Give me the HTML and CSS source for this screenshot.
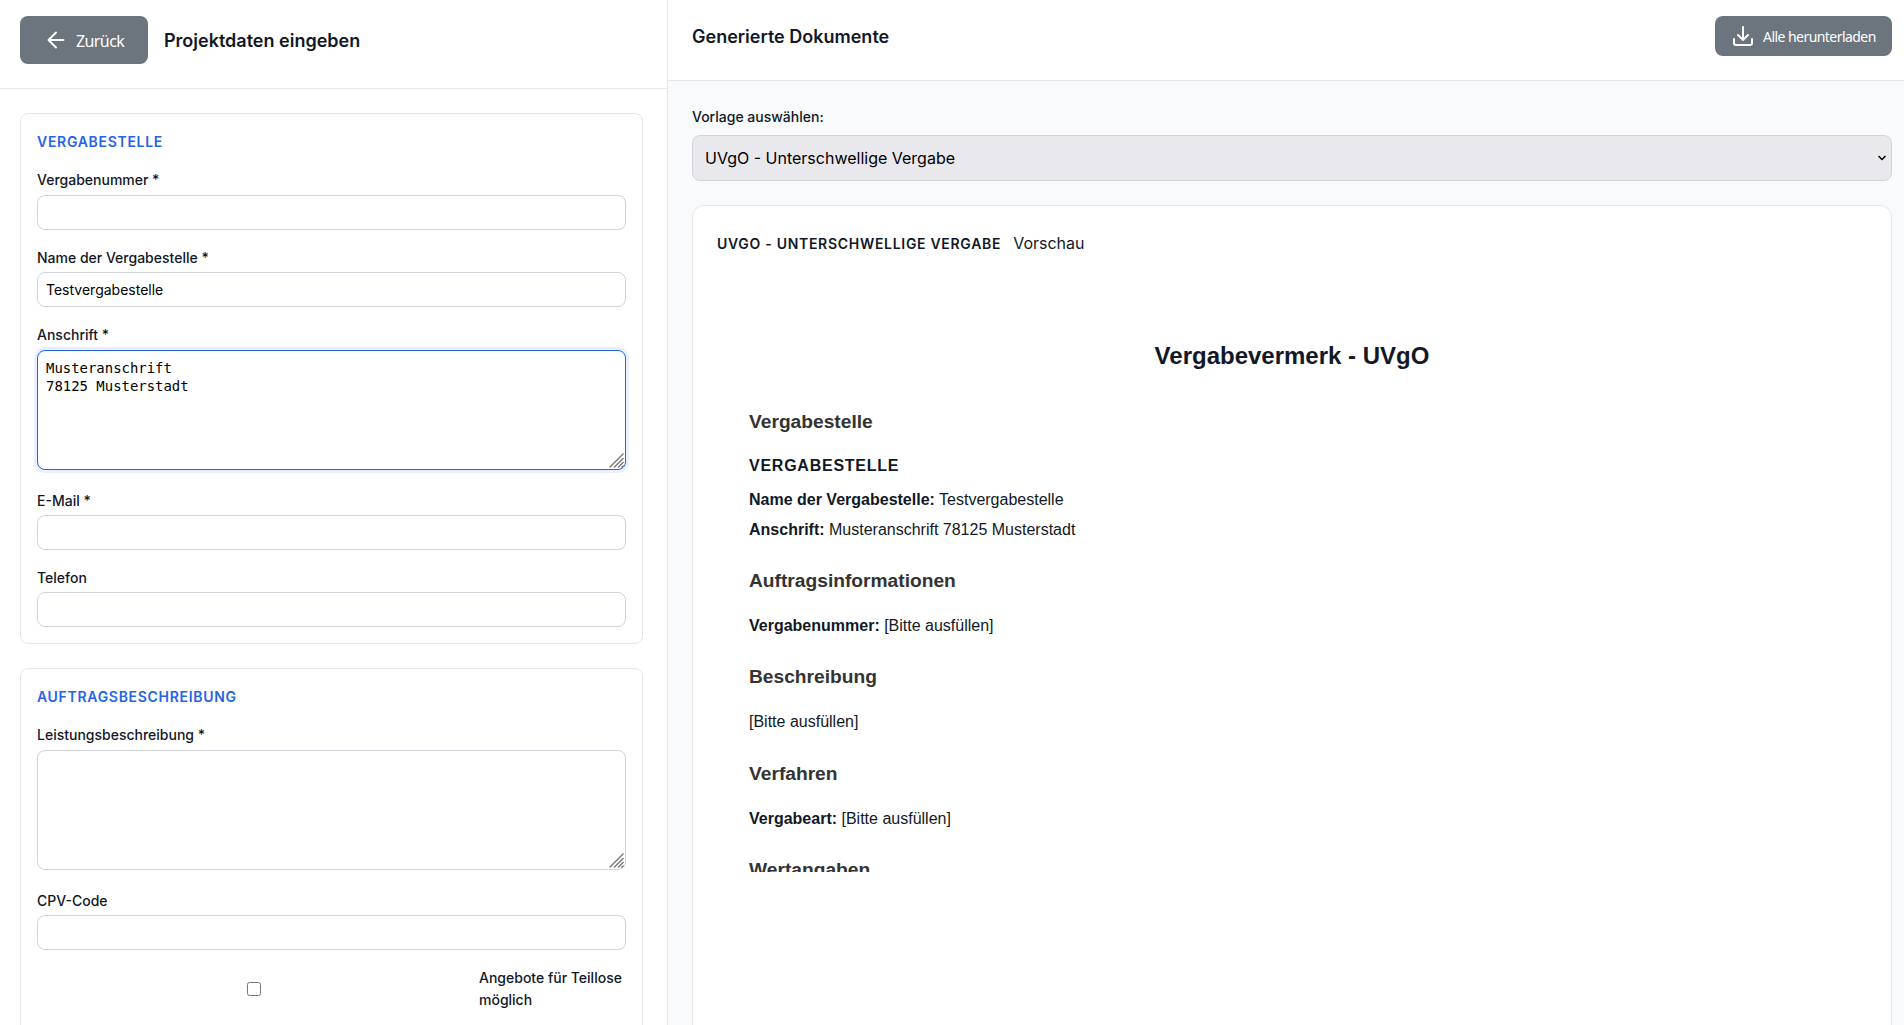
FILE: index.html
```html
<!DOCTYPE html>
<html lang="de">
<head>
<meta charset="utf-8">
<title>Projektdaten eingeben</title>
<link rel="stylesheet" href="styles.css">
</head>
<body>
<div class="app">
  <section class="form-panel">
    <header class="form-header">
      <button class="btn btn-back" type="button">
        <svg width="18" height="18" viewBox="0 0 18 18" fill="none" stroke="currentColor" stroke-width="2" stroke-linecap="round" stroke-linejoin="round"><path d="M16.5 9H1.5M9 1.5L1.5 9 9 16.5"/></svg>
        <span>Zurück</span>
      </button>
      <h2 class="panel-title">Projektdaten eingeben</h2>
    </header>
    <form class="form-body">
      <div class="group">
        <h3 class="group-title">Vergabestelle</h3>
        <div class="field"><label>Vergabenummer *</label><input class="control" type="text"></div>
        <div class="field"><label>Name der Vergabestelle *</label><input class="control" type="text" value="Testvergabestelle"></div>
        <div class="field field-area"><label>Anschrift *</label><div class="area-wrap"><textarea class="control area active">Musteranschrift
78125 Musterstadt</textarea><svg class="grip" width="15" height="15" viewBox="0 0 15 15" fill="none" stroke="#777" stroke-width="1.4"><path d="M.5 14.5l14-14M5 14.5L14.5 5M9 14.5l5.5-5.5M12.5 14.5l2-2"/></svg></div></div>
        <div class="field"><label>E-Mail *</label><input class="control" type="text"></div>
        <div class="field"><label>Telefon</label><input class="control" type="text"></div>
      </div>
      <div class="group group-open">
        <h3 class="group-title">Auftragsbeschreibung</h3>
        <div class="field field-area"><label>Leistungsbeschreibung *</label><div class="area-wrap"><textarea class="control area"></textarea><svg class="grip" width="15" height="15" viewBox="0 0 15 15" fill="none" stroke="#777" stroke-width="1.4"><path d="M.5 14.5l14-14M5 14.5L14.5 5M9 14.5l5.5-5.5M12.5 14.5l2-2"/></svg></div></div>
        <div class="field"><label>CPV-Code</label><input class="control" type="text"></div>
        <div class="check-row"><div class="check-cell"><input class="check" type="checkbox"></div><label class="check-label">Angebote für Teillose möglich</label></div>
      </div>
    </form>
  </section>
  <main class="doc-panel">
    <header class="doc-header">
      <h2 class="panel-title">Generierte Dokumente</h2>
      <button class="btn btn-download" type="button">
        <svg width="20" height="20" viewBox="0 0 20 20" fill="none" stroke="currentColor" stroke-width="2" stroke-linecap="round" stroke-linejoin="round"><path d="M10 1v13M5 9l5 5 5-5M1 13v4a2 2 0 0 0 2 2h14a2 2 0 0 0 2-2v-4"/></svg>
        <span>Alle herunterladen</span>
      </button>
    </header>
    <div class="doc-body">
      <label class="select-label">Vorlage auswählen:</label>
      <div class="select">
        <span>UVgO - Unterschwellige Vergabe</span>
        <svg width="8" height="6" viewBox="0 0 8 6" fill="none" stroke="#000" stroke-width="1.5"><path d="M.5 1L4 4.5 7.5 1"/></svg>
      </div>
      <div class="preview">
        <div class="preview-head"><h3>UVgO - Unterschwellige Vergabe</h3><span>Vorschau</span></div>
        <article class="document">
          <h1>Vergabevermerk - UVgO</h1>
          <h2>Vergabestelle</h2>
          <h3>Vergabestelle</h3>
          <p><strong>Name der Vergabestelle:</strong> Testvergabestelle</p>
          <p><strong>Anschrift:</strong> Musteranschrift 78125 Musterstadt</p>
          <h2>Auftragsinformationen</h2>
          <p><strong>Vergabenummer:</strong> [Bitte ausfüllen]</p>
          <h2>Beschreibung</h2>
          <p>[Bitte ausfüllen]</p>
          <h2>Verfahren</h2>
          <p><strong>Vergabeart:</strong> [Bitte ausfüllen]</p>
          <h2>Wertangaben</h2>
        </article>
      </div>
    </div>
  </main>
</div>
</body>
</html>
```
FILE: styles.css
```css
* { box-sizing: border-box; margin: 0; padding: 0; }
body {
  font-family: Inter, sans-serif;
  font-size: 16px;
  line-height: 1.6;
  color: #111827;
  background: #fff;
  overflow: hidden;
}
.app { display: flex; height: 100vh; overflow: hidden; }

.form-panel { flex: 0 0 668px; border-right: 1px solid #e5e7eb; background: #fff; overflow: hidden; }
.form-header { display: flex; align-items: flex-start; gap: 16px; height: 89px; padding: 16px 20px 24px; border-bottom: 1px solid #e5e7eb; }
.form-header .panel-title { line-height: 50px; }
.panel-title { font-size: 18px; font-weight: 600; }
.btn { display: flex; align-items: center; border: 0; border-radius: 8px; background: #6c757d; color: #fff; font-family: "Noto Sans", sans-serif; }
.btn-back { width: 128px; height: 48px; padding-left: 27px; gap: 11px; font-size: 16px; letter-spacing: -.6px; }
.btn-back span { padding-top: 2px; }
.btn-download { width: 177px; height: 40px; padding-left: 18px; gap: 10px; font-size: 14px; letter-spacing: -.55px; }

.form-body { display: flex; flex-direction: column; gap: 24px; padding: 24px 24px 0 20px; }
.group { border: 1px solid #e5e7eb; border-radius: 8px; padding: 17px 16px 15.4px; }
.group-open { padding-bottom: 40px; }
.group-title { font-size: 14px; font-weight: 600; letter-spacing: .7px; text-transform: uppercase; color: #2563eb; margin-bottom: 16px; }
.field { margin-bottom: 17px; }
.field:last-child { margin-bottom: 0; }
.field label { display: block; font-size: 14px; font-weight: 500; margin-bottom: 3px; }
.control { display: block; width: 100%; height: 35px; padding: 8px; border: 1px solid #d1d5db; border-radius: 8px; background: #fff; color: #000; font-family: Inter, sans-serif; font-size: 14px; outline: 0; }
.area-wrap { position: relative; }
.area { height: 120px; padding-top: 8px; font-family: "DejaVu Sans Mono", monospace; font-size: 13.95px; line-height: 18px; resize: none; }
.grip { position: absolute; right: 2px; bottom: 2px; }
.field-area { margin-bottom: 20px; }
.active { border-color: #2563eb; box-shadow: 0 0 0 3px rgba(37, 99, 235, .1); }
.check-row { display: flex; align-items: center; }
.check-cell { flex: 0 0 442px; display: flex; padding-left: 210px; }
.check { width: 14px; height: 14px; }
.check-label { font-size: 14px; font-weight: 500; }

.doc-panel { flex: 1; min-width: 0; background: #f8fafc; }
.doc-header { display: flex; justify-content: space-between; align-items: flex-start; height: 81px; padding: 16px 12px 0 24px; background: #fff; border-bottom: 1px solid #e5e7eb; }
.doc-header .panel-title { line-height: 42px; }
.doc-body { padding: 25px 12px 0 24px; }
.select-label { display: block; font-size: 14px; font-weight: 500; margin-bottom: 7px; }
.select { display: flex; align-items: center; justify-content: space-between; height: 46px; padding: 0 5px 0 12px; border: 1px solid #d1d5db; border-radius: 8px; background: #e9e9ed; color: #000; }
.preview { height: 900px; margin-top: 24px; padding: 24px; border: 1px solid #e5e7eb; border-radius: 12px; background: #fff; }
.preview-head { display: flex; align-items: center; gap: 12px; height: 26px; }
.preview-head h3 { padding-top: 2px; font-size: 14px; font-weight: 600; letter-spacing: .7px; text-transform: uppercase; }
.document { height: 600px; margin-top: 16px; padding: 65px 32px 0; overflow: hidden; font-family: "Liberation Sans", Arial, sans-serif; }
.document h1 { font-size: 24px; line-height: 38px; text-align: center; margin-bottom: 31.6px; }
.document h2 { font-size: 19.2px; line-height: 30.72px; color: #333; margin: 23.7px 0 16.3px; }
.document h3 { font-size: 16px; line-height: 25.6px; letter-spacing: .75px; text-transform: uppercase; margin: -1px 0 8.5px; }
.document p { line-height: 25.6px; margin-bottom: 4px; }
```
